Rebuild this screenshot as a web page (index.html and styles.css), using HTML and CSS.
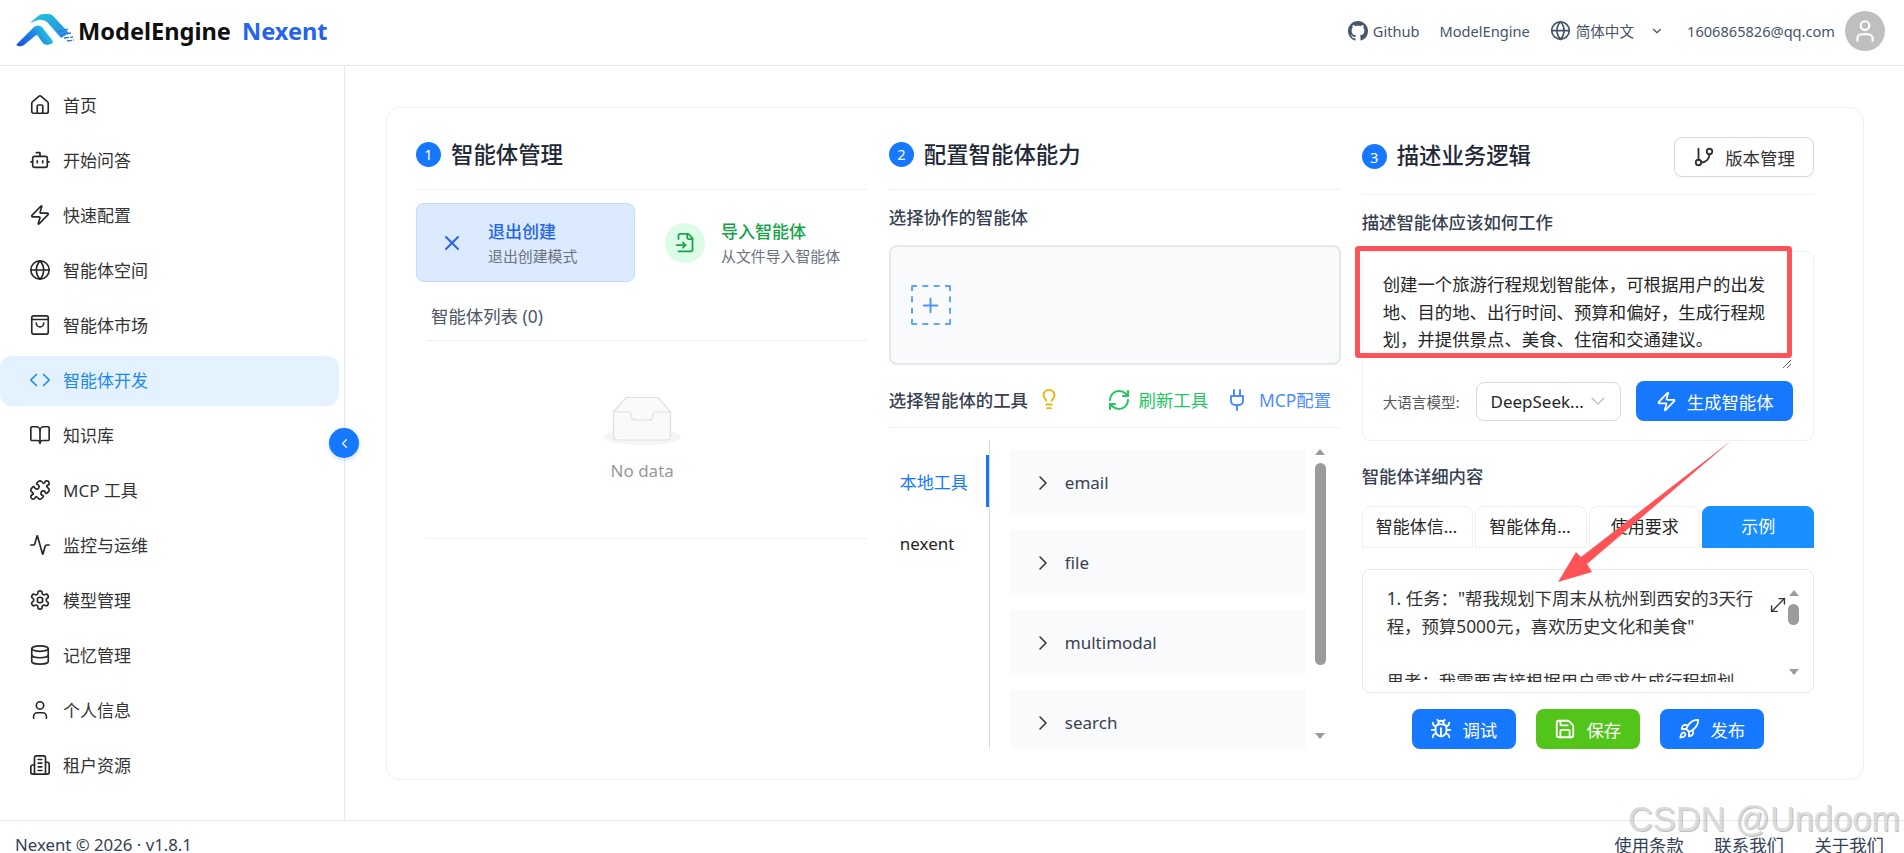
FILE: index.html

```html
<!DOCTYPE html>
<html lang="zh-CN">
<head>
    <meta charset="UTF-8">
    <meta name="viewport" content="width=device-width, initial-scale=1.0">
    <title>Nexent</title>
    <link rel="stylesheet" href="styles.css">
</head>
<body>
    <header class="topbar">
        <div class="brand">
            <svg class="brand-logo" viewBox="0 0 60 33" width="60" height="33">
                <defs>
                    <linearGradient id="archGrad" x1="0" y1="1" x2="1" y2="0.6">
                        <stop offset="0" stop-color="#1550d8"/>
                        <stop offset="0.55" stop-color="#1f7fe8"/>
                        <stop offset="1" stop-color="#26c4dc"/>
                    </linearGradient>
                    <linearGradient id="bandGrad" x1="0" y1="0" x2="1" y2="1">
                        <stop offset="0" stop-color="#1fc6dc"/>
                        <stop offset="1" stop-color="#2a86e6"/>
                    </linearGradient>
                </defs>
                <path d="M3 29 L19 13 Q23 10 27 13 L37 26 Q39 29 36 30 L32 31 Q29 31 27 28 L23 22 Q22 20 20 22 L9 31 Q6 33 3 32 Q0 31 3 29z" fill="url(#archGrad)"/>
                <path d="M15 9 L23 2 Q25 0 29 0 L33 0 Q37 0 39 3 L54 19 L46 24 L33 9 Q29 5 23 6z" fill="url(#bandGrad)"/>
                <path d="M43 18 L53 15 M46 21 L56 19 M49 24 L58 23 M52 27 L59 26" stroke="#2a78d8" stroke-width="1.3" fill="none" stroke-dasharray="5 1.2"/>
            </svg>
            <span class="brand-name">ModelEngine</span>
            <span class="brand-product">Nexent</span>
        </div>
        <nav class="topbar-links">
            <a class="top-link github">
                <svg viewBox="0 0 16 16" width="20" height="20" fill="currentColor"><path d="M8 0C3.58 0 0 3.58 0 8c0 3.54 2.29 6.53 5.47 7.59.4.07.55-.17.55-.38 0-.19-.01-.82-.01-1.49-2.01.37-2.53-.49-2.69-.94-.09-.23-.48-.94-.82-1.13-.28-.15-.68-.52-.01-.53.63-.01 1.08.58 1.23.82.72 1.21 1.87.87 2.33.66.07-.52.28-.87.51-1.07-1.78-.2-3.64-.89-3.64-3.95 0-.87.31-1.59.82-2.15-.08-.2-.36-1.02.08-2.12 0 0 .67-.21 2.2.82.64-.18 1.32-.27 2-.27.68 0 1.36.09 2 .27 1.53-1.04 2.2-.82 2.2-.82.44 1.1.16 1.92.08 2.12.51.56.82 1.27.82 2.15 0 3.07-1.87 3.75-3.65 3.95.29.25.54.73.54 1.48 0 1.07-.01 1.93-.01 2.2 0 .21.15.46.55.38A8.013 8.013 0 0016 8c0-4.42-3.58-8-8-8z"/></svg>
                Github
            </a>
            <a class="top-link">ModelEngine</a>
            <a class="top-link lang">
                <svg class="icon" viewBox="0 0 24 24" width="21" height="21"><circle cx="12" cy="12" r="10"/><path d="M12 2a14.5 14.5 0 0 0 0 20 14.5 14.5 0 0 0 0-20"/><path d="M2 12h20"/></svg>
                简体中文
                <svg class="icon lang-caret" viewBox="0 0 24 24" width="14" height="14"><path d="m6 9 6 6 6-6"/></svg>
            </a>
            <a class="top-link email">1606865826@qq.com</a>
            <span class="avatar">
                <svg class="icon" viewBox="0 0 24 24" width="26" height="26"><path d="M19 21v-2a4 4 0 0 0-4-4H9a4 4 0 0 0-4 4v2"/><circle cx="12" cy="7" r="4"/></svg>
            </span>
        </nav>
    </header>

    <div class="layout">
        <aside class="sidebar">
            <a class="nav-item">
                <svg class="icon" viewBox="0 0 24 24"><path d="M3 10a2 2 0 0 1 .709-1.528l7-5.999a2 2 0 0 1 2.582 0l7 5.999A2 2 0 0 1 21 10v9a2 2 0 0 1-2 2H5a2 2 0 0 1-2-2z"/><path d="M15 21v-8a1 1 0 0 0-1-1h-4a1 1 0 0 0-1 1v8"/></svg>
                首页
            </a>
            <a class="nav-item">
                <svg class="icon" viewBox="0 0 24 24"><path d="M12 8V4H8"/><rect x="4" y="8" width="16" height="12" rx="2"/><path d="M2 14h2"/><path d="M20 14h2"/><path d="M15 13v2"/><path d="M9 13v2"/></svg>
                开始问答
            </a>
            <a class="nav-item">
                <svg class="icon" viewBox="0 0 24 24"><path d="M4 14a1 1 0 0 1-.78-1.63l9.9-10.2a.5.5 0 0 1 .86.46l-1.92 6.02A1 1 0 0 0 13 10h7a1 1 0 0 1 .78 1.63l-9.9 10.2a.5.5 0 0 1-.86-.46l1.92-6.02A1 1 0 0 0 11 14z"/></svg>
                快速配置
            </a>
            <a class="nav-item">
                <svg class="icon" viewBox="0 0 24 24"><circle cx="12" cy="12" r="10"/><path d="M12 2a14.5 14.5 0 0 0 0 20 14.5 14.5 0 0 0 0-20"/><path d="M2 12h20"/></svg>
                智能体空间
            </a>
            <a class="nav-item">
                <svg class="icon" viewBox="0 0 24 24"><rect x="3" y="2" width="18" height="20" rx="2"/><path d="M3 6h18"/><path d="M16 10a4 4 0 0 1-8 0"/></svg>
                智能体市场
            </a>
            <a class="nav-item active">
                <svg class="icon" viewBox="0 0 24 24"><path d="m16 18 6-6-6-6"/><path d="m8 6-6 6 6 6"/></svg>
                智能体开发
            </a>
            <a class="nav-item">
                <svg class="icon" viewBox="0 0 24 24"><path d="M12 7v14"/><path d="M3 18a1 1 0 0 1-1-1V4a1 1 0 0 1 1-1h5a4 4 0 0 1 4 4 4 4 0 0 1 4-4h5a1 1 0 0 1 1 1v13a1 1 0 0 1-1 1h-6a3 3 0 0 0-3 3 3 3 0 0 0-3-3z"/></svg>
                知识库
            </a>
            <a class="nav-item">
                <svg class="icon" viewBox="0 0 24 24"><path d="M15.39 4.39a1 1 0 0 0 1.68-.474 2.5 2.5 0 1 1 3.014 3.015 1 1 0 0 0-.474 1.68l1.683 1.682a2.414 2.414 0 0 1 0 3.414L19.61 15.39a1 1 0 0 1-1.68-.474 2.5 2.5 0 1 0-3.014 3.015 1 1 0 0 1 .474 1.68l-1.683 1.682a2.414 2.414 0 0 1-3.414 0L8.61 19.61a1 1 0 0 0-1.68.474 2.5 2.5 0 1 1-3.014-3.015 1 1 0 0 0 .474-1.68l-1.683-1.682a2.414 2.414 0 0 1 0-3.414L4.39 8.61a1 1 0 0 1 1.68.474 2.5 2.5 0 1 0 3.014-3.015 1 1 0 0 1-.474-1.68l1.683-1.682a2.414 2.414 0 0 1 3.414 0z"/></svg>
                MCP 工具
            </a>
            <a class="nav-item">
                <svg class="icon" viewBox="0 0 24 24"><path d="M22 12h-2.48a2 2 0 0 0-1.93 1.46l-2.35 8.36a.25.25 0 0 1-.48 0L9.24 2.18a.25.25 0 0 0-.48 0l-2.35 8.36A2 2 0 0 1 4.49 12H2"/></svg>
                监控与运维
            </a>
            <a class="nav-item">
                <svg class="icon" viewBox="0 0 24 24"><path d="M12.22 2h-.44a2 2 0 0 0-2 2v.18a2 2 0 0 1-1 1.73l-.43.25a2 2 0 0 1-2 0l-.15-.08a2 2 0 0 0-2.73.73l-.22.38a2 2 0 0 0 .73 2.73l.15.1a2 2 0 0 1 1 1.72v.51a2 2 0 0 1-1 1.74l-.15.09a2 2 0 0 0-.73 2.73l.22.38a2 2 0 0 0 2.73.73l.15-.08a2 2 0 0 1 2 0l.43.25a2 2 0 0 1 1 1.73V20a2 2 0 0 0 2 2h.44a2 2 0 0 0 2-2v-.18a2 2 0 0 1 1-1.73l.43-.25a2 2 0 0 1 2 0l.15.08a2 2 0 0 0 2.73-.73l.22-.39a2 2 0 0 0-.73-2.73l-.15-.08a2 2 0 0 1-1-1.74v-.5a2 2 0 0 1 1-1.74l.15-.09a2 2 0 0 0 .73-2.73l-.22-.38a2 2 0 0 0-2.73-.73l-.15.08a2 2 0 0 1-2 0l-.43-.25a2 2 0 0 1-1-1.73V4a2 2 0 0 0-2-2z"/><circle cx="12" cy="12" r="3"/></svg>
                模型管理
            </a>
            <a class="nav-item">
                <svg class="icon" viewBox="0 0 24 24"><ellipse cx="12" cy="5" rx="9" ry="3"/><path d="M3 5v14a9 3 0 0 0 18 0V5"/><path d="M3 12a9 3 0 0 0 18 0"/></svg>
                记忆管理
            </a>
            <a class="nav-item">
                <svg class="icon" viewBox="0 0 24 24"><path d="M19 21v-2a4 4 0 0 0-4-4H9a4 4 0 0 0-4 4v2"/><circle cx="12" cy="7" r="4"/></svg>
                个人信息
            </a>
            <a class="nav-item">
                <svg class="icon" viewBox="0 0 24 24"><path d="M6 22V4a2 2 0 0 1 2-2h8a2 2 0 0 1 2 2v18Z"/><path d="M6 12H4a2 2 0 0 0-2 2v6a2 2 0 0 0 2 2h2"/><path d="M18 9h2a2 2 0 0 1 2 2v9a2 2 0 0 1-2 2h-2"/><path d="M10 6h4"/><path d="M10 10h4"/><path d="M10 14h4"/><path d="M10 18h4"/></svg>
                租户资源
            </a>
            <button class="collapse-btn">
                <svg class="icon" viewBox="0 0 24 24" width="15" height="15"><path d="m15 18-6-6 6-6"/></svg>
            </button>
        </aside>

        <main class="main">
            <div class="panel">
                <!-- column 1 -->
                <section class="column">
                    <div class="col-head">
                        <span class="step">1</span>
                        <h2 class="col-title">智能体管理</h2>
                    </div>
                    <div class="action-row">
                        <div class="action action-exit">
                            <svg class="icon" viewBox="0 0 24 24" width="24" height="24"><path d="M18 6 6 18"/><path d="m6 6 12 12"/></svg>
                            <div class="action-text">
                                <div class="action-title">退出创建</div>
                                <div class="action-sub">退出创建模式</div>
                            </div>
                        </div>
                        <div class="action action-import">
                            <span class="import-circle">
                                <svg class="icon" viewBox="0 0 24 24" width="21" height="21"><path d="M4 22h14a2 2 0 0 0 2-2V7l-5-5H6a2 2 0 0 0-2 2v4"/><path d="M14 2v4a2 2 0 0 0 2 2h4"/><path d="M2 15h10"/><path d="m9 18 3-3-3-3"/></svg>
                            </span>
                            <div class="action-text">
                                <div class="action-title">导入智能体</div>
                                <div class="action-sub">从文件导入智能体</div>
                            </div>
                        </div>
                    </div>
                    <div class="agent-list">
                        <div class="agent-list-head">智能体列表 (0)</div>
                        <div class="empty">
                            <svg viewBox="0 0 80 52" width="80" height="52">
                                <ellipse cx="40" cy="42" rx="39" ry="8" fill="#f5f5f5"/>
                                <path d="M11.5 17 L24 2.5 H56 L68.500 17 V41 Q68.500 45 64.500 45 H15.500 Q11.500 45 11.500 41z" fill="#fafafa" stroke="#e0e0e0" stroke-width="1.2"/>
                                <path d="M11.500 17 H26 Q29 17 29 20 Q29 25 33 25 H47 Q51 25 51 20 Q51 17 54 17 H68.500" fill="none" stroke="#e0e0e0" stroke-width="1.2"/>
                            </svg>
                            <div class="empty-text">No data</div>
                        </div>
                    </div>
                </section>

                <!-- column 2 -->
                <section class="column">
                    <div class="col-head">
                        <span class="step">2</span>
                        <h2 class="col-title">配置智能体能力</h2>
                    </div>
                    <div class="field-label">选择协作的智能体</div>
                    <div class="collab-box">
                        <div class="add-box">
                            <svg class="icon" viewBox="0 0 24 24" width="23" height="23"><path d="M5 12h14"/><path d="M12 5v14"/></svg>
                        </div>
                    </div>
                    <div class="tools-head">
                        <span class="tools-label">选择智能体的工具</span>
                        <svg class="icon bulb" viewBox="0 0 24 24" width="22" height="22"><path d="M15 14c.2-1 .7-1.700 1.500-2.500 1-.9 1.500-2.200 1.500-3.500A6 6 0 0 0 6 8c0 1 .2 2.200 1.500 3.500.7.7 1.300 1.500 1.500 2.500"/><path d="M9 18h6"/><path d="M10 22h4"/></svg>
                        <a class="tool-link refresh">
                            <svg class="icon" viewBox="0 0 24 24" width="24" height="24"><path d="M3 12a9 9 0 0 1 9-9 9.750 9.750 0 0 1 6.740 2.740L21 8"/><path d="M21 3v5h-5"/><path d="M21 12a9 9 0 0 1-9 9 9.750 9.750 0 0 1-6.740-2.740L3 16"/><path d="M8 16H3v5"/></svg>
                            刷新工具
                        </a>
                        <a class="tool-link mcp">
                            <svg class="icon" viewBox="0 0 24 24" width="24" height="24"><path d="M12 22v-5"/><path d="M9 8V2"/><path d="M15 8V2"/><path d="M18 8v5a4 4 0 0 1-4 4h-4a4 4 0 0 1-4-4V8Z"/></svg>
                            MCP配置
                        </a>
                    </div>
                    <div class="tools-body">
                        <div class="tool-tabs">
                            <div class="tool-tab active">本地工具</div>
                            <div class="tool-tab">nexent</div>
                        </div>
                        <div class="tool-list">
                            <div class="tool-row"><svg class="icon" viewBox="0 0 24 24" width="24" height="24"><path d="m9 18 6-6-6-6"/></svg>email</div>
                            <div class="tool-row"><svg class="icon" viewBox="0 0 24 24" width="24" height="24"><path d="m9 18 6-6-6-6"/></svg>file</div>
                            <div class="tool-row"><svg class="icon" viewBox="0 0 24 24" width="24" height="24"><path d="m9 18 6-6-6-6"/></svg>multimodal</div>
                            <div class="tool-row"><svg class="icon" viewBox="0 0 24 24" width="24" height="24"><path d="m9 18 6-6-6-6"/></svg>search</div>
                        </div>
                        <div class="scrollbar">
                            <span class="arrow-up"></span>
                            <span class="thumb tools-thumb"></span>
                            <span class="arrow-down"></span>
                        </div>
                    </div>
                </section>

                <!-- column 3 -->
                <section class="column">
                    <div class="col-head col-head-tall">
                        <span class="step">3</span>
                        <h2 class="col-title">描述业务逻辑</h2>
                        <button class="version-btn">
                            <svg class="icon" viewBox="0 0 24 24" width="22" height="22"><path d="M6 3v12"/><circle cx="18" cy="6" r="3"/><circle cx="6" cy="18" r="3"/><path d="M18 9a9 9 0 0 1-9 9"/></svg>
                            版本管理
                        </button>
                    </div>
                    <div class="field-label">描述智能体应该如何工作</div>
                    <div class="prompt-card">
                        <div class="prompt-area">
                            <p class="prompt-text">创建一个旅游行程规划智能体，可根据用户的出发地、目的地、出行时间、预算和偏好，生成行程规划，并提供景点、美食、住宿和交通建议。</p>
                            <svg class="grip" viewBox="0 0 10 10" width="10" height="10"><path d="M1 9 9 1M5 9l4-4" stroke="#666" stroke-width="1" fill="none"/></svg>
                        </div>
                        <div class="model-row">
                            <span class="model-label">大语言模型:</span>
                            <div class="model-select">
                                <span>DeepSeek...</span>
                                <svg class="icon" viewBox="0 0 24 24" width="24" height="24"><path d="m6 9 6 6 6-6"/></svg>
                            </div>
                            <button class="btn btn-blue generate-btn">
                                <svg class="icon" viewBox="0 0 24 24" width="21" height="21"><path d="M4 14a1 1 0 0 1-.78-1.630l9.900-10.200a.5.5 0 0 1 .86.46l-1.920 6.020A1 1 0 0 0 13 10h7a1 1 0 0 1 .78 1.630l-9.900 10.200a.5.5 0 0 1-.86-.46l1.920-6.020A1 1 0 0 0 11 14z"/></svg>
                                生成智能体
                            </button>
                        </div>
                    </div>
                    <div class="field-label detail-label">智能体详细内容</div>
                    <div class="detail-tabs">
                        <div class="detail-tab">智能体信息</div>
                        <div class="detail-tab">智能体角色</div>
                        <div class="detail-tab">使用要求</div>
                        <div class="detail-tab active">示例</div>
                    </div>
                    <div class="detail-box">
                        <div class="detail-text">1. 任务："帮我规划下周末从杭州到西安的3天行程，预算5000元，喜欢历史文化和美食"<br><br>思考：我需要直接根据用户需求生成行程规划</div>
                        <svg class="icon expand-icon" viewBox="0 0 24 24" width="22" height="22"><path d="M11 19H5v-6"/><path d="M13 5h6v6"/><path d="M19 5 5 19"/></svg>
                        <div class="scrollbar detail-scroll">
                            <span class="arrow-up"></span>
                            <span class="thumb detail-thumb"></span>
                            <span class="arrow-down"></span>
                        </div>
                    </div>
                    <div class="action-buttons">
                        <button class="btn btn-blue">
                            <svg class="icon" viewBox="0 0 24 24" width="22" height="22"><path d="m8 2 1.880 1.880"/><path d="M14.120 3.880 16 2"/><path d="M9 7.130v-1a3.003 3.003 0 1 1 6 0v1"/><path d="M12 20c-3.300 0-6-2.700-6-6v-3a4 4 0 0 1 4-4h4a4 4 0 0 1 4 4v3c0 3.300-2.700 6-6 6"/><path d="M12 20v-9"/><path d="M6.530 9C4.600 8.800 3 7.100 3 5"/><path d="M6 13H2"/><path d="M3 21c0-2.100 1.700-3.900 3.800-4"/><path d="M20.970 5c0 2.100-1.600 3.800-3.500 4"/><path d="M22 13h-4"/><path d="M17.200 17c2.100.1 3.800 1.900 3.800 4"/></svg>
                            调试
                        </button>
                        <button class="btn btn-green">
                            <svg class="icon" viewBox="0 0 24 24" width="22" height="22"><path d="M15.200 3a2 2 0 0 1 1.400.6l3.800 3.800a2 2 0 0 1 .6 1.400V19a2 2 0 0 1-2 2H5a2 2 0 0 1-2-2V5a2 2 0 0 1 2-2z"/><path d="M17 21v-7a1 1 0 0 0-1-1H8a1 1 0 0 0-1 1v7"/><path d="M7 3v4a1 1 0 0 0 1 1h7"/></svg>
                            保存
                        </button>
                        <button class="btn btn-blue">
                            <svg class="icon" viewBox="0 0 24 24" width="22" height="22"><path d="M4.500 16.500c-1.500 1.260-2 5-2 5s3.740-.5 5-2c.71-.84.7-2.130-.09-2.910a2.180 2.180 0 0 0-2.910-.09z"/><path d="m12 15-3-3a22 22 0 0 1 2-3.950A12.880 12.880 0 0 1 22 2c0 2.720-.78 7.500-6 11a22.350 22.350 0 0 1-4 2z"/><path d="M9 12H4s.55-3.030 2-4c1.620-1.080 5 0 5 0"/><path d="M12 15v5s3.030-.55 4-2c1.080-1.620 0-5 0-5"/></svg>
                            发布
                        </button>
                    </div>
                </section>
            </div>
        </main>
    </div>

    <footer class="footer">
        <span class="copyright">Nexent © 2026 · v1.8.1</span>
        <div class="footer-links">
            <a>使用条款</a>
            <a>联系我们</a>
            <a>关于我们</a>
        </div>
    </footer>

    <!-- red marks drawn on top of the screenshot -->
    <svg class="annotation" viewBox="0 0 1904 853" width="1904" height="853">
        <rect x="1357.500" y="248.500" width="432" height="107" rx="1" fill="none" stroke="#ff5357" stroke-width="5"/>
        <polygon points="1732,440 1587,564 1592,572 1558,582 1576,552 1581,557" fill="#ff5357"/>
    </svg>
    <div class="watermark">CSDN @Undoom</div>
</body>
</html>
```

FILE: styles.css

```css
* {
    box-sizing: border-box;
}

html, body {
    height: 100%;
}

body {
    margin: 0;
    display: flex;
    flex-direction: column;
    overflow: hidden;
    position: relative;
    background-color: #fff;
    color: #262626;
    font-family: "Noto Sans", "Noto Sans CJK SC", sans-serif;
    font-size: 17.4px;
}

button {
    font-family: inherit;
    font-size: inherit;
}

.icon {
    fill: none;
    stroke: currentColor;
    stroke-width: 2;
    stroke-linecap: round;
    stroke-linejoin: round;
    flex: none;
}

/* top bar */
.topbar {
    flex: none;
    height: 66px;
    display: flex;
    align-items: center;
    justify-content: space-between;
    padding: 0 19px 4px 15px;
    border-bottom: 1px solid #e2e8f0;
}

.brand {
    display: flex;
    align-items: center;
}

.brand-logo {
    margin-right: 3px;
}

.brand-name {
    font-size: 23.6px;
    font-weight: 700;
    color: #0f0f0f;
    margin-right: 11px;
}

.brand-product {
    font-size: 23.6px;
    font-weight: 700;
    color: #2563eb;
}

.topbar-links {
    display: flex;
    align-items: center;
    color: #475569;
    font-size: 14.6px;
}

.top-link {
    display: flex;
    align-items: center;
}

.github {
    gap: 5px;
    margin-right: 20px;
}

.top-link + .lang {
    margin-left: 20px;
    gap: 5px;
}

.lang-caret {
    margin-left: 11px;
}

.email {
    margin-left: 23px;
    margin-right: 10px;
}

.avatar {
    width: 40px;
    height: 40px;
    border-radius: 50%;
    background-color: #bfbfbf;
    color: #fff;
    display: flex;
    align-items: center;
    justify-content: center;
}

/* page body */
.layout {
    flex: none;
    height: 754px;
    display: flex;
}

.sidebar {
    flex: none;
    width: 345px;
    padding-top: 15px;
    border-right: 1px solid #e2e8f0;
    position: relative;
}

.nav-item {
    display: flex;
    align-items: center;
    gap: 12px;
    width: 339px;
    height: 50px;
    margin-bottom: 5px;
    padding: 0 0 3px 29px;
    border-radius: 12px;
    color: #333;
    font-size: 17px;
}

.nav-item .icon {
    width: 22px;
    height: 22px;
    stroke-width: 1.8;
    color: #262626;
}

.nav-item.active {
    background-color: #e3f2fe;
    color: #1e88f0;
}

.nav-item.active .icon {
    color: #1e88f0;
}

.collapse-btn {
    position: absolute;
    top: 362px;
    left: 329px;
    width: 30px;
    height: 30px;
    padding: 0;
    border: none;
    border-radius: 50%;
    background-color: #1677ff;
    color: #fff;
    display: flex;
    align-items: center;
    justify-content: center;
    box-shadow: 0 2px 5px rgba(22, 119, 255, 0.25);
}

.main {
    flex: 1;
    padding: 41px 40px 40px 41px;
}

.panel {
    height: 673px;
    padding: 29px 49px 0 29px;
    border: 1px solid #eef0f3;
    border-radius: 14px;
    display: grid;
    grid-template-columns: repeat(3, 1fr);
    column-gap: 20.5px;
}

.column {
    min-width: 0;
}

.col-head {
    display: flex;
    align-items: center;
    height: 53px;
    padding-bottom: 18px;
    border-bottom: 1px solid #eef0f3;
}

.col-head-tall {
    height: 58px;
    padding-bottom: 17px;
}

.step {
    flex: none;
    width: 25px;
    height: 25px;
    margin-right: 10px;
    border-radius: 50%;
    background-color: #1677ff;
    color: #fff;
    font-size: 14.6px;
    display: flex;
    align-items: center;
    justify-content: center;
}

.col-title {
    margin: 0 0 2px;
    font-size: 22.4px;
    font-weight: 500;
    color: #1f2937;
}

.col-head-tall .col-title {
    margin-bottom: 5px;
}

.col-head-tall .step {
    margin-bottom: 1px;
}

.version-btn {
    margin-left: auto;
    width: 140px;
    height: 40px;
    border: 1px solid #d9d9d9;
    border-radius: 8px;
    background-color: #fff;
    color: #333;
    display: flex;
    align-items: center;
    justify-content: center;
    gap: 10px;
    box-shadow: 0 1px 2px rgba(0, 0, 0, 0.03);
}

/* column 1 */
.action-row {
    display: flex;
    gap: 16px;
    margin-top: 13px;
}

.action {
    height: 79px;
    display: flex;
    align-items: center;
    border-radius: 8px;
}

.action-exit {
    width: 219px;
    padding-left: 23px;
    gap: 24px;
    background-color: #dbeafe;
    border: 1px solid #bfdbfe;
    color: #2563eb;
}

.action-import {
    padding-left: 14px;
    gap: 16px;
    color: #16a34a;
}

.action-text {
    padding-top: 1px;
}

.import-circle {
    width: 40px;
    height: 40px;
    border-radius: 50%;
    background-color: #dcfce7;
    display: flex;
    align-items: center;
    justify-content: center;
}

.action-title {
    font-size: 17px;
    font-weight: 500;
    line-height: 25px;
}

.action-sub {
    font-size: 14.9px;
    line-height: 24px;
    color: #6b7280;
}

.agent-list {
    margin: 22px 0 0 10px;
}

.agent-list-head {
    padding: 0 5px 12px;
    line-height: 24px;
    color: #4b5563;
    border-bottom: 1px solid #eef0f3;
}

.empty {
    height: 198px;
    padding: 54px 10px 0 0;
    border-bottom: 1px solid #eef0f3;
    text-align: center;
}

.empty svg {
    display: block;
    margin: 0 auto;
}

.empty-text {
    margin-top: 12px;
    line-height: 24px;
    font-size: 17px;
    color: #999;
}

/* column 2 */
.field-label {
    margin-top: 15px;
    line-height: 24px;
    color: #374151;
    font-weight: 500;
}

.collab-box {
    height: 120px;
    margin-top: 16px;
    padding-left: 20px;
    display: flex;
    align-items: center;
    background-color: #f9fafb;
    border: 2px solid #e5e7eb;
    border-radius: 8px;
}

.add-box {
    width: 40px;
    height: 40px;
    border: 2px dashed #60a5fa;
    border-radius: 2px;
    color: #4f93f7;
    display: flex;
    align-items: center;
    justify-content: center;
}

.tools-head {
    display: flex;
    align-items: center;
    height: 43px;
    margin-top: 20px;
    padding-bottom: 13px;
    border-bottom: 1px solid #eef0f3;
}

.tools-label {
    color: #374151;
    font-weight: 500;
}

.bulb {
    margin: 0 0 2px 10px;
    color: #eab308;
}

.tool-link {
    display: flex;
    align-items: center;
}

.refresh {
    gap: 8px;
    margin-left: auto;
    color: #22c55e;
}

.mcp {
    gap: 10px;
    margin-left: 17px;
    margin-right: 10px;
    color: #4f8cff;
}

.tools-body {
    display: flex;
    height: 308px;
    margin-top: 12px;
}

.tool-tabs {
    flex: none;
    width: 101px;
    padding-top: 15px;
    border-right: 1px solid #d9d9d9;
    font-size: 17px;
}

.tool-tab {
    height: 52px;
    margin-bottom: 10px;
    padding-left: 11px;
    display: flex;
    align-items: center;
}

.tool-tab.active {
    color: #1677ff;
    border-right: 3px solid #1677ff;
}

.tool-list {
    flex: none;
    width: 296px;
    margin: 10px 9px 0 20px;
    overflow: hidden;
}

.tool-row {
    height: 65px;
    margin-bottom: 15px;
    padding-left: 21px;
    background-color: #f9fafb;
    color: #374151;
    font-size: 17px;
    display: flex;
    align-items: center;
    gap: 10px;
}

.tool-row .icon {
    stroke-width: 1.5;
    color: #333;
}

.scrollbar {
    flex: none;
    width: 11px;
    padding: 9px 0;
    display: flex;
    flex-direction: column;
    align-items: center;
}

.arrow-up {
    border-left: 5px solid transparent;
    border-right: 5px solid transparent;
    border-bottom: 6px solid #9b9b9b;
}

.arrow-down {
    margin-top: auto;
    border-left: 5px solid transparent;
    border-right: 5px solid transparent;
    border-top: 6px solid #9b9b9b;
}

.thumb {
    width: 11px;
    margin-top: 8px;
    border-radius: 5.5px;
    background-color: #9b9b9b;
}

.tools-thumb {
    height: 202px;
}

/* column 3 */
.prompt-card {
    height: 190px;
    margin-top: 17px;
    padding: 19px 20px 0;
    border: 1px solid #f0f0f0;
    border-radius: 8px;
}

.prompt-area {
    height: 100px;
    position: relative;
}

.prompt-text {
    margin: 0;
    width: 390px;
    line-height: 27.5px;
    color: #262626;
}

.grip {
    position: absolute;
    right: 1px;
    bottom: 2px;
}

.model-row {
    display: flex;
    align-items: center;
    margin-top: 10px;
}

.model-label {
    width: 94px;
    font-size: 14.6px;
    color: #595959;
}

.model-select {
    width: 145px;
    height: 39px;
    padding: 0 10px 0 13px;
    border: 1px solid #d9d9d9;
    border-radius: 8px;
    font-size: 17px;
    display: flex;
    align-items: center;
    justify-content: space-between;
}

.model-select .icon {
    stroke-width: 1.3;
    color: #bfbfbf;
}

.btn {
    height: 40px;
    border: none;
    border-radius: 8px;
    color: #fff;
    display: flex;
    align-items: center;
    justify-content: center;
    gap: 10px;
}

.btn-blue {
    background-color: #1677ff;
}

.btn-green {
    background-color: #52c41a;
}

.generate-btn {
    width: 157px;
    margin-left: 15px;
}

.detail-label {
    margin-top: 23px;
}

.detail-tabs {
    display: flex;
    gap: 2px;
    height: 42px;
    margin-top: 18px;
    font-size: 17px;
}

.detail-tab {
    flex: 1;
    min-width: 0;
    padding: 0 13px;
    border: 1px solid #f0f0f0;
    border-radius: 8px 8px 0 0;
    line-height: 40px;
    text-align: center;
    white-space: nowrap;
    overflow: hidden;
    text-overflow: ellipsis;
}

.detail-tab.active {
    background-color: #1890ff;
    border-color: #1890ff;
    color: #fff;
}

.detail-box {
    display: flex;
    position: relative;
    height: 124px;
    margin-top: 21px;
    padding: 15px 14px 0 24px;
    border: 1px solid #e5e7eb;
    border-radius: 8px;
}

.detail-text {
    flex: none;
    width: 372px;
    height: 97px;
    overflow: hidden;
    line-height: 27.5px;
    color: #333;
}

.expand-icon {
    position: absolute;
    top: 24px;
    right: 24px;
    stroke-width: 1.5;
    color: #333;
}

.detail-scroll {
    height: 103px;
    margin: -4px 0 0 auto;
}

.detail-thumb {
    height: 21px;
}

.action-buttons {
    display: flex;
    justify-content: center;
    gap: 20px;
    margin-top: 16px;
}

.action-buttons .btn {
    width: 104px;
}

/* footer */
.footer {
    flex: none;
    height: 48px;
    padding: 0 20px 0 15px;
    border-top: 1px solid #e2e8f0;
    display: flex;
    align-items: center;
    justify-content: space-between;
    color: #334155;
}

.copyright {
    font-size: 16.8px;
}

.footer-links {
    display: flex;
    gap: 30.5px;
}

/* overlays */
.annotation {
    position: absolute;
    top: 0;
    left: 0;
    pointer-events: none;
}

.watermark {
    position: absolute;
    top: 799px;
    left: 1628px;
    font-family: "Liberation Sans", sans-serif;
    font-size: 34.4px;
    line-height: 40px;
    white-space: nowrap;
    color: #d5d5d5;
    text-shadow: 1px 1px 0 #b5b5b5;
    opacity: 0.85;
}
```
